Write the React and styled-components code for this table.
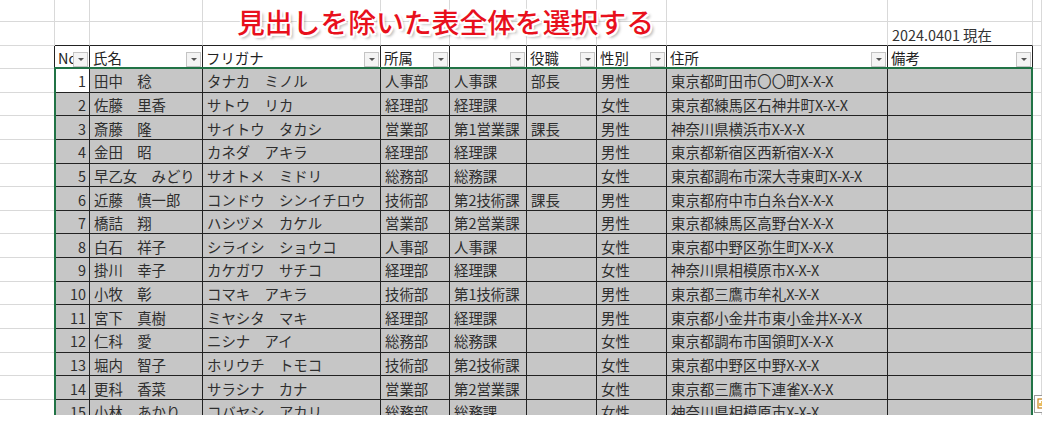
import React from "react";
import styled, { createGlobalStyle } from "styled-components";

const GlobalStyle = createGlobalStyle`
  html, body {
    margin: 0;
    padding: 0;
    background: #fff;
  }
  body {
    font-family: "Noto Sans CJK JP", "Noto Sans", sans-serif;
  }
`;

// 列幅は元のシートの罫線位置に合わせてある
const COLS = "55px 35px 113px 178px 69px 77px 70px 70px 221px 145px 1fr";

const headers = ["No", "氏名", "フリガナ", "所属", "", "役職", "性別", "住所", "備考"];

const rows = [
  ["田中　稔", "タナカ　ミノル", "人事部", "人事課", "部長", "男性", "東京都町田市〇〇町X-X-X"],
  ["佐藤　里香", "サトウ　リカ", "経理部", "経理課", "", "女性", "東京都練馬区石神井町X-X-X"],
  ["斎藤　隆", "サイトウ　タカシ", "営業部", "第1営業課", "課長", "男性", "神奈川県横浜市X-X-X"],
  ["金田　昭", "カネダ　アキラ", "経理部", "経理課", "", "男性", "東京都新宿区西新宿X-X-X"],
  ["早乙女　みどり", "サオトメ　ミドリ", "総務部", "総務課", "", "女性", "東京都調布市深大寺東町X-X-X"],
  ["近藤　慎一郎", "コンドウ　シンイチロウ", "技術部", "第2技術課", "課長", "男性", "東京都府中市白糸台X-X-X"],
  ["橋詰　翔", "ハシヅメ　カケル", "営業部", "第2営業課", "", "男性", "東京都練馬区高野台X-X-X"],
  ["白石　祥子", "シライシ　ショウコ", "人事部", "人事課", "", "女性", "東京都中野区弥生町X-X-X"],
  ["掛川　幸子", "カケガワ　サチコ", "経理部", "経理課", "", "女性", "神奈川県相模原市X-X-X"],
  ["小牧　彰", "コマキ　アキラ", "技術部", "第1技術課", "", "男性", "東京都三鷹市牟礼X-X-X"],
  ["宮下　真樹", "ミヤシタ　マキ", "経理部", "経理課", "", "男性", "東京都小金井市東小金井X-X-X"],
  ["仁科　愛", "ニシナ　アイ", "総務部", "総務課", "", "女性", "東京都調布市国領町X-X-X"],
  ["堀内　智子", "ホリウチ　トモコ", "技術部", "第2技術課", "", "女性", "東京都中野区中野X-X-X"],
  ["更科　香菜", "サラシナ　カナ", "営業部", "第2営業課", "", "女性", "東京都三鷹市下連雀X-X-X"],
  ["小林　あかり", "コバヤシ　アカリ", "総務部", "総務課", "", "女性", "神奈川県相模原市X-X-X"],
];

const GRID = "#d9d9d9";
const RULE = "#222";

function Sheet() {
  return (
    <Wrap>
      <Row $h={22}>
        {Array.from({ length: 11 }).map((_, i) => (
          <Cell key={i} />
        ))}
      </Row>
      <Row $h={24}>
        {Array.from({ length: 11 }).map((_, i) => (
          <Cell key={i} $ruleBottom={i > 0 && i < 10}>
            {i === 9 ? "2024.0401 現在" : ""}
          </Cell>
        ))}
      </Row>
      <Row $h={23}>
        <Cell $ruleRight />
        {headers.map((h, i) => (
          <HeadCell key={i} $ruleRight $ruleBottom>
            {h}
            <DropButton>
              <Caret />
            </DropButton>
          </HeadCell>
        ))}
        <Cell />
      </Row>
      <DataArea>
        {rows.map((r, n) => (
          <Row key={n} $h={23.65}>
            <Cell $ruleRight />
            <Cell $tone={n === 0 ? "active" : "data"} $ruleRight $ruleBottom $right>
              {n + 1}
            </Cell>
            {r.map((v, i) => (
              <Cell key={i} $tone="data" $ruleRight $ruleBottom>
                {v}
              </Cell>
            ))}
            <Cell $tone="data" $ruleRight $ruleBottom />
            <Cell />
          </Row>
        ))}
        <Selection />
      </DataArea>
      <Title>見出しを除いた表全体を選択する</Title>
      <QuickAnalysis>
        <svg width="10" height="14" viewBox="0 0 10 14">
          <rect x="1" y="2" width="8" height="9" fill="#fff" stroke="#c8841c" strokeWidth="1.2" />
          <path d="M3 9V6M5 9V4M7 9V7" stroke="#e0a21e" strokeWidth="1.4" />
        </svg>
      </QuickAnalysis>
    </Wrap>
  );
}

export default function App() {
  return (
    <>
      <GlobalStyle />
      <Sheet />
    </>
  );
}

const Wrap = styled.div`
  position: relative;
  width: 1042px;
  height: 415px;
  overflow: hidden;
  background: #fff;
  color: #262626;
  font-size: 14.4px;
`;

const Row = styled.div`
  display: grid;
  grid-template-columns: ${COLS};
  height: ${(p) => p.$h}px;
`;

const Cell = styled.div`
  box-sizing: border-box;
  display: flex;
  align-items: center;
  justify-content: ${(p) => (p.$right ? "flex-end" : "flex-start")};
  padding: 1px 3px 0 4px;
  white-space: nowrap;
  overflow: hidden;
  border-right: 1px solid ${(p) => (p.$ruleRight ? RULE : GRID)};
  border-bottom: 1px solid ${(p) => (p.$ruleBottom ? RULE : GRID)};
  background: ${(p) => (p.$tone === "data" ? "#c6c6c6" : "#fff")};
  color: ${(p) => (p.$tone === "data" || p.$tone === "active" ? "#2e2e2e" : "#333")};
`;

const HeadCell = styled(Cell)`
  position: relative;
  color: #222;
  padding-left: 3px;
`;

const DropButton = styled.span`
  position: absolute;
  right: 1px;
  bottom: 1px;
  width: 15px;
  height: 15px;
  box-sizing: border-box;
  border: 1px solid #c4c4c4;
  background: #f4f4f4;
  display: flex;
  align-items: center;
  justify-content: center;
`;

const Caret = styled.span`
  width: 0;
  height: 0;
  border-left: 3px solid transparent;
  border-right: 3px solid transparent;
  border-top: 3px solid #555;
`;

const DataArea = styled.div`
  position: relative;
`;

const Selection = styled.div`
  position: absolute;
  left: 54px;
  top: -2px;
  width: 979px;
  bottom: -40px;
  box-sizing: border-box;
  border: 2px solid #217346;
  pointer-events: none;
`;

const Title = styled.div`
  position: absolute;
  left: 237px;
  top: 6px;
  font-family: "Noto Sans CJK JP", sans-serif;
  font-weight: 500;
  font-size: 27.8px;
  line-height: 1.1;
  letter-spacing: 0;
  color: #e8101c;
  text-shadow: 2px 0 #fff, -2px 0 #fff, 0 2px #fff, 0 -2px #fff,
    1.5px 1.5px #fff, -1.5px -1.5px #fff, 1.5px -1.5px #fff, -1.5px 1.5px #fff,
    3px 3px 3px rgba(0, 0, 0, 0.3);
`;

const QuickAnalysis = styled.div`
  position: absolute;
  left: 1034px;
  top: 395px;
  width: 18px;
  height: 18px;
  box-sizing: border-box;
  border: 1px solid #9a9a9a;
  background: #fff;
  display: flex;
  align-items: center;
  padding-left: 2px;
`;
